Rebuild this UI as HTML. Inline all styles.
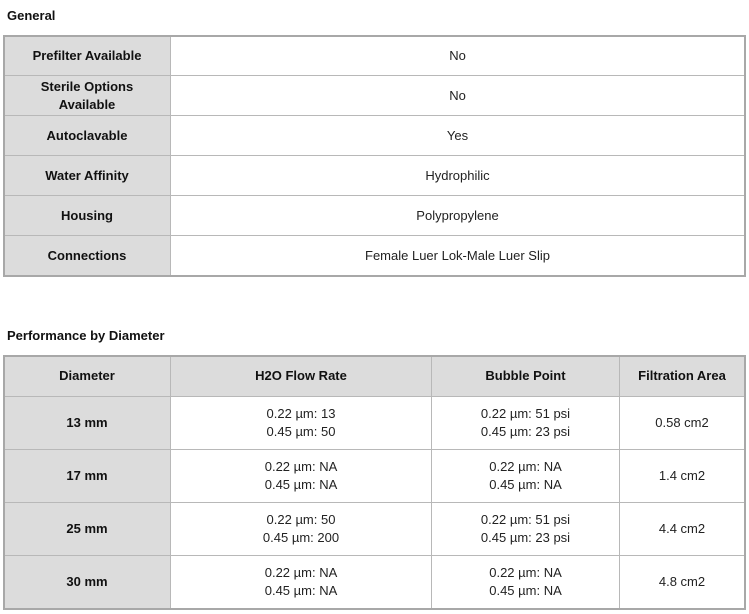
<!DOCTYPE html><html><head><style>
body{margin:0;width:749px;height:614px;background:#fff;font-family:"Liberation Sans",sans-serif;font-size:13px;color:#222;position:relative;overflow:hidden}
.t{position:absolute;left:7px;font-weight:bold;font-size:13px;color:#111}
.c{position:absolute;display:flex;align-items:center;justify-content:center;text-align:center;box-sizing:border-box;border-right:1px solid #b8b8b8;border-bottom:1px solid #b8b8b8;line-height:18px}
.h{background:#dcdcdc;font-weight:bold;color:#111}
.box{position:absolute;border:2px solid #a8a8a8;box-sizing:border-box;pointer-events:none}
</style></head><body>
<div class="t" style="top:8px">General</div>
<div class="t" style="top:328px">Performance by Diameter</div>
<div id="a"></div>
<script>
function cell(x,y,w,h,txt,hd){var d=document.createElement('div');d.className='c'+(hd?' h':'');d.style.cssText='left:'+x+'px;top:'+y+'px;width:'+w+'px;height:'+h+'px';d.innerHTML=txt;document.body.appendChild(d);}
var g=[["Prefilter Available","No"],["Sterile Options<br>Available","No"],["Autoclavable","Yes"],["Water Affinity","Hydrophilic"],["Housing","Polypropylene"],["Connections","Female Luer Lok-Male Luer Slip"]];
g.forEach(function(r,i){var y=36+i*40;cell(4,y,167,40,r[0],1);cell(171,y,574,40,r[1]);});
var b=document.createElement('div');b.className='box';b.style.cssText='left:3px;top:35px;width:743px;height:242px';document.body.appendChild(b);
var xs=[4,171,432,620,745];
var hd=["Diameter","H2O Flow Rate","Bubble Point","Filtration Area"];
hd.forEach(function(t,j){cell(xs[j],356,xs[j+1]-xs[j],41,t,1);});
var rows=[["13 mm","0.22 µm: 13<br>0.45 µm: 50","0.22 µm: 51 psi<br>0.45 µm: 23 psi","0.58 cm2"],["17 mm","0.22 µm: NA<br>0.45 µm: NA","0.22 µm: NA<br>0.45 µm: NA","1.4 cm2"],["25 mm","0.22 µm: 50<br>0.45 µm: 200","0.22 µm: 51 psi<br>0.45 µm: 23 psi","4.4 cm2"],["30 mm","0.22 µm: NA<br>0.45 µm: NA","0.22 µm: NA<br>0.45 µm: NA","4.8 cm2"]];
rows.forEach(function(r,i){var y=397+i*53;r.forEach(function(t,j){cell(xs[j],y,xs[j+1]-xs[j],53,t,j==0);});});
var b2=document.createElement('div');b2.className='box';b2.style.cssText='left:3px;top:355px;width:743px;height:255px';document.body.appendChild(b2);
</script>
</body></html>
